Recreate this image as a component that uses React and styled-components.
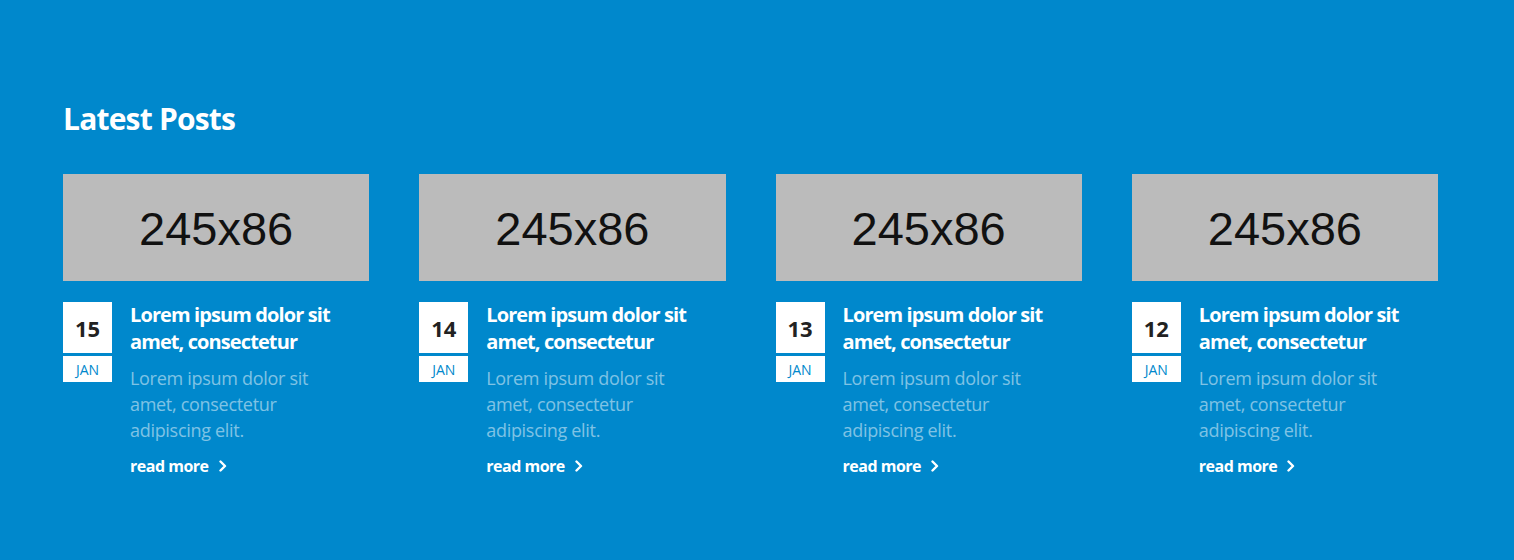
import styled, { createGlobalStyle } from "styled-components";

const GlobalStyle = createGlobalStyle`
  html, body {
    margin: 0;
    padding: 0;
    background: #0088cc;
    font-family: "Open Sans", "Liberation Sans", sans-serif;
  }
`;

const Section = styled.section`
  height: 560px;
  box-sizing: border-box;
  padding: 99px 76px 0 63px;
  background: #0088cc;
`;

const Heading = styled.h2`
  margin: 0 0 35px 0;
  font-size: 30px;
  line-height: 40px;
  font-weight: 700;
  letter-spacing: -0.8px;
  color: #fff;
`;

const PostGrid = styled.div`
  display: grid;
  grid-template-columns: repeat(4, 1fr);
  column-gap: 50px;
`;

const Post = styled.article`
  display: flex;
  flex-direction: column;
`;

const Thumb = styled.div`
  height: 107px;
  background: #bbbbbb;
  display: flex;
  align-items: center;
  justify-content: center;
  padding-top: 1px;
  box-sizing: border-box;
  font-family: "Liberation Sans", Arial, sans-serif;
  font-size: 47px;
  color: #111;
  margin-bottom: 21px;
`;

const PostBody = styled.div`
  display: flex;
  gap: 18px;
`;

const DateBox = styled.div`
  flex: 0 0 49px;
  display: flex;
  flex-direction: column;
  gap: 3px;
`;

const Day = styled.div`
  height: 51px;
  background: #fff;
  display: flex;
  align-items: center;
  justify-content: center;
  font-size: 22px;
  font-weight: 700;
  color: #222;
`;

const Month = styled.div`
  height: 26px;
  background: #fff;
  display: flex;
  align-items: center;
  justify-content: center;
  font-size: 14px;
  color: #0088cc;
  text-transform: uppercase;
`;

const Content = styled.div`
  flex: 1;
  padding-right: 24px;
`;

const Title = styled.h3`
  margin: -1px 0 0 0;
  font-size: 20px;
  line-height: 27px;
  font-weight: 700;
  letter-spacing: -0.9px;
  color: #fff;
`;

const Excerpt = styled.p`
  margin: 10px 0 0 0;
  font-size: 18px;
  line-height: 26px;
  letter-spacing: -0.3px;
  color: rgba(255, 255, 255, 0.5);
`;

const ReadMore = styled.a`
  display: inline-flex;
  align-items: center;
  gap: 10px;
  margin-top: 12px;
  font-size: 16px;
  font-weight: 700;
  letter-spacing: -0.5px;
  color: #fff;
  text-decoration: none;
`;

const posts = [
  { day: 15, month: "Jan" },
  { day: 14, month: "Jan" },
  { day: 13, month: "Jan" },
  { day: 12, month: "Jan" },
];

function Chevron() {
  return (
    <svg width="8" height="12" viewBox="0 0 8 12">
      <polyline
        points="1.5,1.5 6,6 1.5,10.5"
        fill="none"
        stroke="#fff"
        strokeWidth="2.4"
        strokeLinecap="round"
        strokeLinejoin="round"
      />
    </svg>
  );
}

export default function App() {
  return (
    <>
      <GlobalStyle />
      <Section>
        <Heading>Latest Posts</Heading>
        <PostGrid>
          {posts.map((p) => (
            <Post key={p.day}>
              <Thumb>245x86</Thumb>
              <PostBody>
                <DateBox>
                  <Day>{p.day}</Day>
                  <Month>{p.month}</Month>
                </DateBox>
                <Content>
                  <Title>Lorem ipsum dolor sit amet, consectetur</Title>
                  <Excerpt>
                    Lorem ipsum dolor sit amet, consectetur adipiscing elit.
                  </Excerpt>
                  <ReadMore href="#">
                    read more <Chevron />
                  </ReadMore>
                </Content>
              </PostBody>
            </Post>
          ))}
        </PostGrid>
      </Section>
    </>
  );
}
